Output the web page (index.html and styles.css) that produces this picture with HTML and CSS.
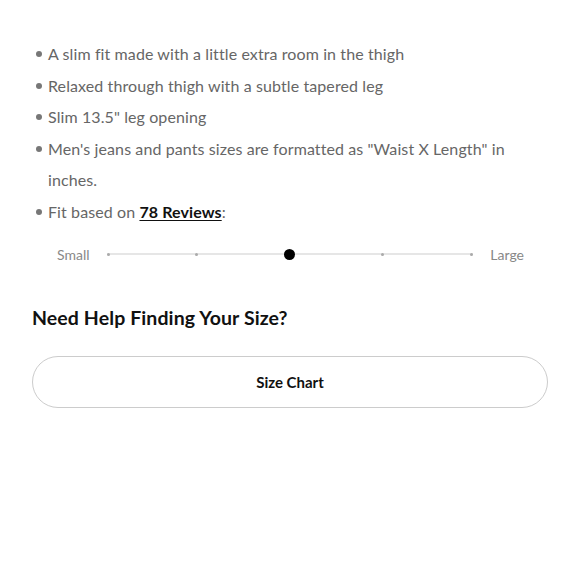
FILE: index.html
```html
<!DOCTYPE html>
<html lang="en">
<head>
    <meta charset="UTF-8">
    <meta name="viewport" content="width=device-width, initial-scale=1.0">
    <title>Fit Details</title>
    <link rel="stylesheet" href="styles.css">
</head>
<body>
    <div id="fit">
        <ul class="details">
            <li>A slim fit made with a little extra room in the thigh</li>
            <li>Relaxed through thigh with a subtle tapered leg</li>
            <li>Slim 13.5" leg opening</li>
            <li>Men's jeans and pants sizes are formatted as "Waist X Length" in inches.</li>
            <li>Fit based on <a href="#" class="reviews">78 Reviews</a>:</li>
        </ul>
        <div class="fit-scale">
            <span class="scale-label">Small</span>
            <div class="track">
                <span class="tick"></span>
                <span class="tick"></span>
                <span class="tick current"></span>
                <span class="tick"></span>
                <span class="tick"></span>
            </div>
            <span class="scale-label">Large</span>
        </div>
        <h3>Need Help Finding Your Size?</h3>
        <button>Size Chart</button>
    </div>
</body>
</html>
```

FILE: styles.css
```css
body {
    font-family: Lato, "Noto Sans", sans-serif;
    margin: 0;
    padding: 0;
    background-color: #fff;
    color: #111;
}
#fit {
    padding: 38px 32px 0;
}
.details {
    margin: 0;
    padding: 0 0 0 16px;
    list-style: none;
}
.details li {
    position: relative;
    font-size: 16px;
    line-height: 31.6px;
    letter-spacing: 0.1px;
    color: #666;
}
.details li::before {
    content: "";
    position: absolute;
    left: -12px;
    top: 13px;
    width: 6px;
    height: 6px;
    border-radius: 50%;
    background-color: #777;
}
.reviews {
    color: #111;
    font-weight: bold;
    text-decoration: underline;
    text-underline-offset: 2px;
}
.fit-scale {
    display: flex;
    align-items: center;
    margin-top: 18px;
    padding: 0 24px 0 25px;
    gap: 17px;
}
.scale-label {
    font-size: 14px;
    color: #888;
}
.track {
    flex: 1;
    display: flex;
    justify-content: space-between;
    align-items: center;
    height: 12px;
    background: linear-gradient(#e6e6e6, #e6e6e6) center / 100% 2px no-repeat;
}
.tick {
    width: 3px;
    height: 3px;
    border-radius: 50%;
    background-color: #aaa;
}
.tick.current {
    width: 11px;
    height: 11px;
    background-color: #000;
}
h3 {
    margin: 43px 0 27px;
    font-size: 19.5px;
    letter-spacing: 0.1px;
    color: #111;
}
button {
    width: 100%;
    height: 52px;
    background-color: #fff;
    border: 1.5px solid #ccc;
    border-radius: 26px;
    font-family: inherit;
    font-size: 15px;
    font-weight: bold;
    color: #111;
    cursor: pointer;
}
```
